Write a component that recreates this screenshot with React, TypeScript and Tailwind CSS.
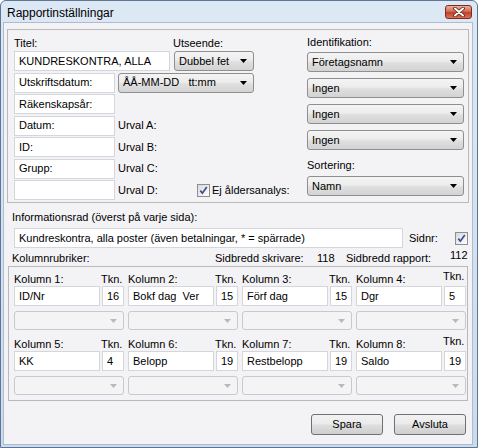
import clsx from "clsx"

function Arrow({ disabled }: { disabled?: boolean }) {
  return (
    <svg width="7" height="4" viewBox="0 0 7 4" className="shrink-0">
      <path d="M0 0 H7 L3.5 4 Z" fill={disabled ? "#b9b9b9" : "#000"} />
    </svg>
  )
}

function Combo({ value, className, disabled }: { value?: string; className?: string; disabled?: boolean }) {
  return (
    <div
      className={clsx(
        "flex shrink-0 items-center rounded-[3px] border pl-[4px] pr-[6px]",
        disabled
          ? "border-[#c6c9cd] bg-[#f4f4f4]"
          : "border-[#8e8f8f] bg-[linear-gradient(#f4f4f4_0%,#ececec_45%,#dfdfdf_55%,#d3d3d3_100%)]",
        className,
      )}
    >
      <span className="flex-1 truncate whitespace-pre">{value}</span>
      <Arrow disabled={disabled} />
    </div>
  )
}

function Field({ children, className }: { children?: React.ReactNode; className?: string }) {
  return (
    <div className={clsx("flex h-[20px] shrink-0 items-center border border-[#d3d6db] bg-white pl-[4px] whitespace-pre", className)}>
      {children}
    </div>
  )
}

function Check({ className }: { className?: string }) {
  return (
    <span
      className={clsx(
        "flex h-[13px] w-[13px] shrink-0 items-center justify-center border border-[#8e8f8f] bg-gradient-to-br from-[#d8d8de] to-white",
        className,
      )}
    >
      <svg width="9" height="9" viewBox="0 0 9 9">
        <path d="M1.3 4.6 L3.4 7.2 L7.8 1" fill="none" stroke="#3d4f8c" strokeWidth="1.7" />
      </svg>
    </span>
  )
}

function Column({ n, name, tkn, raise }: { n: number; name: string; tkn: string; raise?: boolean }) {
  return (
    <div className="flex w-[110px] shrink-0 flex-col">
      <div className="flex h-[14px] items-center whitespace-nowrap">
        <span className="w-[87px] shrink-0">Kolumn {n}:</span>
        <span className={raise ? "-translate-y-[3px]" : ""}>Tkn.</span>
      </div>
      <div className="flex gap-[2px]">
        <Field className="w-[86px]">{name}</Field>
        <Field className="w-[22px]">{tkn}</Field>
      </div>
      <Combo disabled className="mt-[5px] h-[19px] w-[110px]" />
    </div>
  )
}

const urval = [
  { box: "Räkenskapsår:", label: "" },
  { box: "Datum:", label: "Urval A:" },
  { box: "ID:", label: "Urval B:" },
  { box: "Grupp:", label: "Urval C:" },
]

export default function App() {
  return (
    <div className="h-[448px] w-[478px] overflow-hidden bg-white font-['Liberation_Sans',Arial,sans-serif] text-[11px] text-black">
      <div className="flex h-full w-full flex-col rounded-t-[6px] border border-[#5f7594] bg-gradient-to-b from-[#dde8f5] to-[#cbdbee]">
        {/* title bar */}
        <div className="flex h-[21px] shrink-0 items-center pt-[3px] pl-[6px]">
          <span className="text-[12px]">Rapportinställningar</span>
          <div className="mt-[1px] mr-[5px] ml-auto flex h-[14px] w-[27px] items-center justify-center self-start rounded-[3px] border border-[#7b2b1f] bg-[linear-gradient(#eab0a0_0%,#d66a52_45%,#c1402a_55%,#d8735a_100%)]">
            <svg width="12" height="10" viewBox="0 0 12 10">
              <path d="M2 1.5 L10 8.5 M10 1.5 L2 8.5" stroke="#5a1e12" strokeWidth="3.6" strokeLinecap="round" />
              <path d="M2 1.5 L10 8.5 M10 1.5 L2 8.5" stroke="#fff" strokeWidth="2" strokeLinecap="round" />
            </svg>
          </div>
        </div>

        {/* client area */}
        <div className="mr-[4px] mb-[2px] ml-[2px] flex flex-1 flex-col border border-[#aebccf] bg-[#f3f2f5]">
          {/* top panel */}
          <div className="mt-[6px] ml-[3px] flex h-[174px] w-[462px] border border-[#b9b9b9]">
            <div className="flex w-[246px] shrink-0 flex-col gap-[1.5px] pt-[6px] pl-[6px] whitespace-nowrap">
              <div className="flex h-[14px] items-center">
                <span className="w-[159px] shrink-0">Titel:</span>
                <span>Utseende:</span>
              </div>
              <div className="-mt-[0.5px] flex gap-[4px]">
                <Field className="w-[156px]">KUNDRESKONTRA, ALLA</Field>
                <Combo value="Dubbel fet" className="h-[20px] w-[80px]" />
              </div>
              <div className="flex gap-[3px]">
                <Field className="w-[101px]">Utskriftsdatum:</Field>
                <Combo value="ÅÅ-MM-DD   tt:mm" className="h-[20px] w-[136px]" />
              </div>
              {urval.map((r) => (
                <div key={r.box} className="flex items-center gap-[3px]">
                  <Field className="w-[101px]">{r.box}</Field>
                  <span>{r.label}</span>
                </div>
              ))}
              <div className="flex items-center gap-[3px]">
                <Field className="w-[101px]" />
                <span className="w-[76px] shrink-0">Urval D:</span>
                <Check />
                <span className="ml-[-1px] shrink-0">Ej åldersanalys:</span>
              </div>
            </div>

            <div className="ml-[53px] flex w-[157px] shrink-0 flex-col pt-[5px]">
              <span className="flex h-[14px] items-center">Identifikation:</span>
              <div className="mt-[3px] flex flex-col gap-[6px]">
                <Combo value="Företagsnamn" className="h-[20px]" />
                <Combo value="Ingen" className="h-[20px]" />
                <Combo value="Ingen" className="h-[20px]" />
                <Combo value="Ingen" className="h-[20px]" />
              </div>
              <span className="mt-[8px] flex h-[14px] items-center">Sortering:</span>
              <Combo value="Namn" className="mt-[4px] h-[20px]" />
            </div>
          </div>

          {/* information row */}
          <span className="mt-[7px] flex h-[14px] items-center pl-[8px]">Informationsrad (överst på varje sida):</span>
          <div className="mt-[4px] ml-[10px] flex items-center">
            <Field className="w-[389px]">Kundreskontra, alla poster (även betalningar, * = spärrade)</Field>
            <span className="ml-[6px] w-[46px] shrink-0">Sidnr:</span>
            <Check />
          </div>

          <div className="mt-[3px] flex h-[14px] items-center pl-[8px] whitespace-nowrap">
            <span className="w-[203px] shrink-0">Kolumnrubriker:</span>
            <span className="w-[102px] shrink-0">Sidbredd skrivare:</span>
            <span className="w-[29px] shrink-0">118</span>
            <span className="w-[104px] shrink-0">Sidbredd rapport:</span>
            <span className="-translate-y-[3px]">112</span>
          </div>

          {/* column box */}
          <div className="mt-[1px] ml-[4px] flex w-[460px] flex-col gap-[7px] border border-[#b9b9b9] pt-[5px] pb-[5px] pl-[5px]">
            <div className="flex gap-[4px]">
              <Column n={1} name="ID/Nr" tkn="16" />
              <Column n={2} name="Bokf dag  Ver" tkn="15" />
              <Column n={3} name="Förf dag" tkn="15" />
              <Column n={4} name="Dgr" tkn="5" raise />
            </div>
            <div className="flex gap-[4px]">
              <Column n={5} name="KK" tkn="4" />
              <Column n={6} name="Belopp" tkn="19" />
              <Column n={7} name="Restbelopp" tkn="19" />
              <Column n={8} name="Saldo" tkn="19" raise />
            </div>
          </div>

          {/* buttons */}
          <div className="mt-[13px] mr-[6px] flex justify-end gap-[11px]">
            {["Spara", "Avsluta"].map((b) => (
              <button
                key={b}
                className="flex h-[21px] w-[72px] items-center justify-center rounded-[3px] border border-[#707070] bg-[linear-gradient(#f2f2f2_0%,#ebebeb_45%,#dddddd_55%,#cfcfcf_100%)]"
              >
                {b}
              </button>
            ))}
          </div>
        </div>
      </div>
    </div>
  )
}
